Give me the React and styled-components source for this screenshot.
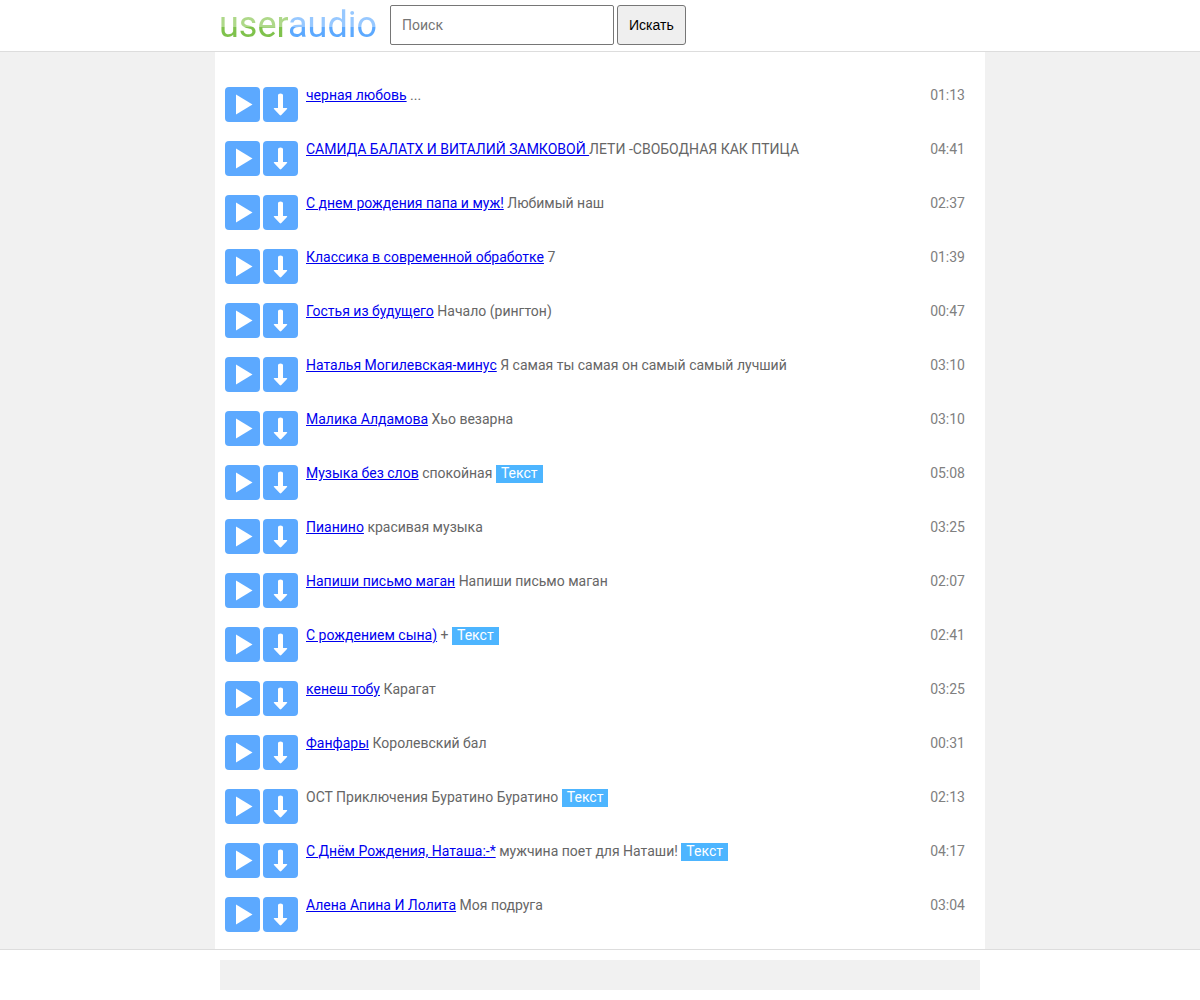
import React from 'react'
import styled, { createGlobalStyle } from 'styled-components'

const GlobalStyle = createGlobalStyle`
  body {
    margin: 0;
    background: #ffffff;
    color: #666666;
    font-family: Roboto, 'Liberation Sans', sans-serif;
    font-size: 14px;
    line-height: 16px;
  }
  * {
    box-sizing: border-box;
  }
`

const Header = styled.header`
  background: #ffffff;
  border-bottom: 1px solid #dddddd;
`

const HeaderInner = styled.div`
  display: flex;
  align-items: flex-start;
  max-width: 770px;
  margin: 0 auto;
  padding: 5px 4px 6px;
`

const Logo = styled.a`
  width: 171px;
  font-size: 36px;
  line-height: 40px;
  text-decoration: none;
`

const LogoPart = styled.span`
  background: linear-gradient(
    to bottom,
    ${({ $light }) => $light} 55%,
    ${({ $dark }) => $dark} 55%
  );
  background-clip: text;
  -webkit-background-clip: text;
  color: transparent;
`

const SearchForm = styled.form`
  display: flex;
  gap: 3px;
`

const SearchInput = styled.input`
  width: 224px;
  height: 40px;
  padding: 0 11px;
  border: 1px solid #767676;
  border-radius: 2px;
  background: #ffffff;
  font-family: inherit;
  font-size: 14px;

  &::placeholder {
    color: #757575;
  }
`

const SearchButton = styled.button`
  height: 40px;
  padding: 0 11px;
  border: 1px solid #767676;
  border-radius: 3px;
  background: #efefef;
  color: #000000;
  font-family: 'Liberation Sans', sans-serif;
  font-size: 14px;
  cursor: pointer;
`

const Main = styled.main`
  background: #f1f1f1;
  border-bottom: 1px solid #dddddd;
`

const TrackList = styled.ul`
  max-width: 770px;
  margin: 0 auto;
  padding: 26px 20px 7px 10px;
  background: #ffffff;
  list-style: none;
`

const TrackRow = styled.li`
  display: flex;
  align-items: flex-start;
  gap: 8px;
  padding: 9px 0 10px;
`

const Controls = styled.div`
  display: flex;
  gap: 3px;
`

const IconButton = styled.button`
  width: 35px;
  height: 35px;
  padding: 0;
  border: 0;
  border-radius: 4px;
  background: #5ca9ff;
  cursor: pointer;

  svg {
    display: block;
    fill: #ffffff;
  }
`

const TrackName = styled.div`
  flex: 1;
`

const Artist = styled.a`
  color: #0000ee;
  white-space: pre;
`

const LyricsBadge = styled.a`
  padding: 0 5px 2px;
  background: #4db5ff;
  color: #ffffff;
  text-decoration: none;
`

const Duration = styled.time`
  color: #808080;
`

const Footer = styled.footer`
  max-width: 770px;
  margin: 0 auto;
  padding: 10px 5px;
`

const FooterBar = styled.div`
  height: 30px;
  background: #f1f1f1;
`

const tracks = [
  { artist: 'черная любовь', title: '...', time: '01:13' },
  { artist: 'САМИДА БАЛАТХ И ВИТАЛИЙ ЗАМКОВОЙ ', title: 'ЛЕТИ -СВОБОДНАЯ КАК ПТИЦА', time: '04:41' },
  { artist: 'С днем рождения папа и муж!', title: 'Любимый наш', time: '02:37' },
  { artist: 'Классика в современной обработке', title: '7', time: '01:39' },
  { artist: 'Гостья из будущего', title: 'Начало (рингтон)', time: '00:47' },
  { artist: 'Наталья Могилевская-минус', title: 'Я самая ты самая он самый самый лучший', time: '03:10' },
  { artist: 'Малика Алдамова', title: 'Хьо везарна', time: '03:10' },
  { artist: 'Музыка без слов', title: 'спокойная', time: '05:08', lyrics: true },
  { artist: 'Пианино', title: 'красивая музыка', time: '03:25' },
  { artist: 'Напиши письмо маган', title: 'Напиши письмо маган', time: '02:07' },
  { artist: 'С рождением сына)', title: '+', time: '02:41', lyrics: true },
  { artist: 'кенеш тобу', title: 'Карагат', time: '03:25' },
  { artist: 'Фанфары', title: 'Королевский бал', time: '00:31' },
  { title: 'ОСТ Приключения Буратино Буратино', time: '02:13', lyrics: true },
  { artist: 'С Днём Рождения, Наташа:-*', title: 'мужчина поет для Наташи!', time: '04:17', lyrics: true },
  { artist: 'Алена Апина И Лолита', title: 'Моя подруга', time: '03:04' },
]

const PlayIcon = () => (
  <svg width="35" height="35" viewBox="0 0 35 35" aria-hidden="true">
    <path d="M11 7.5L27.5 17.5L11 27.5Z" />
  </svg>
)

const DownloadIcon = () => (
  <svg width="35" height="35" viewBox="0 0 35 35" aria-hidden="true">
    <path d="M15 8Q15 6.5 17.5 6.5Q20 6.5 20 8V21H23.5Q24.8 21 24 22L18.3 28Q17.5 28.8 16.7 28L11 22Q10.2 21 11.5 21H15Z" />
  </svg>
)

const Track = ({ artist, title, time, lyrics }) => (
  <TrackRow>
    <Controls>
      <IconButton type="button" aria-label="Слушать">
        <PlayIcon />
      </IconButton>
      <IconButton type="button" aria-label="Скачать">
        <DownloadIcon />
      </IconButton>
    </Controls>
    <TrackName>
      {artist && <Artist href="#artist">{artist}</Artist>}
      {artist && !artist.endsWith(' ') && ' '}
      {title}
      {lyrics && ' '}
      {lyrics && <LyricsBadge href="#lyrics">Текст</LyricsBadge>}
    </TrackName>
    <Duration>{time}</Duration>
  </TrackRow>
)

const App = () => {
  return (
    <>
      <GlobalStyle />
      <Header>
        <HeaderInner>
          <Logo href="#home">
            <LogoPart $light="#aed889" $dark="#7fc24c">user</LogoPart>
            <LogoPart $light="#97c8ff" $dark="#5ca9ff">audio</LogoPart>
          </Logo>
          <SearchForm>
            <SearchInput type="text" placeholder="Поиск" aria-label="Поиск" />
            <SearchButton type="submit">Искать</SearchButton>
          </SearchForm>
        </HeaderInner>
      </Header>
      <Main>
        <TrackList>
          {tracks.map((track, index) => (
            <Track key={index} {...track} />
          ))}
        </TrackList>
      </Main>
      <Footer>
        <FooterBar />
      </Footer>
    </>
  )
}

export default App
